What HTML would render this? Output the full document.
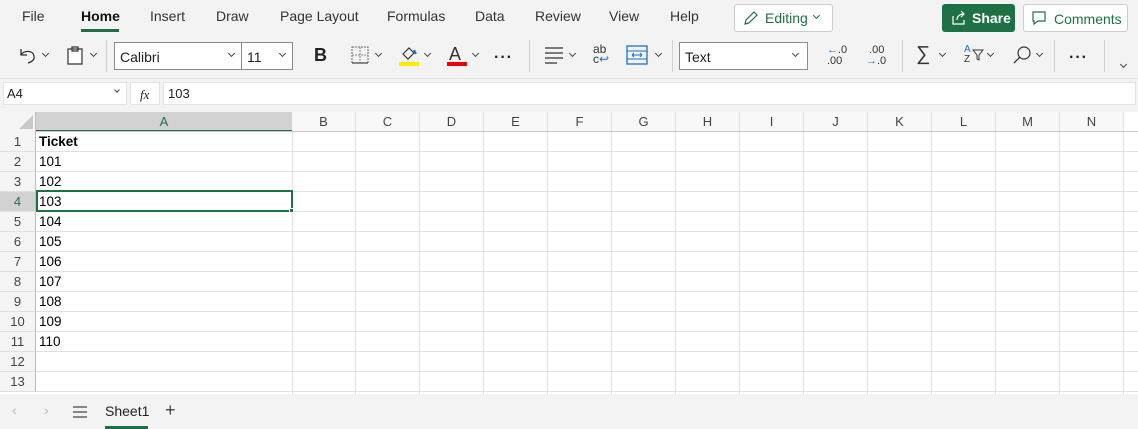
<!DOCTYPE html>
<html><head><meta charset="utf-8"><style>
*{box-sizing:border-box;margin:0;padding:0}
body{width:1138px;height:429px;overflow:hidden;background:#f3f3f3;font-family:"Liberation Sans",sans-serif;position:relative;color:#222}
.a{position:absolute}
.tab{position:absolute;top:8px;font-size:14px;color:#333}
.dd{position:absolute;background:#fff;border:1px solid #8a8a8a;height:28px;top:42px;font-size:14px;padding:6px 5px}
.chev{position:absolute;width:7px;height:7px;border-right:1.3px solid #444;border-bottom:1.3px solid #444;transform:rotate(45deg)}
.sep{position:absolute;top:40px;width:1px;height:32px;background:#d0d0d0}
.ch{position:absolute;top:112px;height:20px;font-size:13px;color:#444;text-align:center;line-height:19px;border-right:1px solid #e1e1e1;background:#f8f8f8}
.rh{position:absolute;left:0;width:36px;height:20px;font-size:13px;color:#444;text-align:center;line-height:20px;border-bottom:1px solid #e1e1e1;border-right:1px solid #bbb;background:#f5f5f5}
.hl{position:absolute;left:36px;width:1102px;height:1px;background:#e1e1e1}
.vl{position:absolute;top:132px;width:1px;height:262px;background:#e1e1e1}
.cell{position:absolute;left:39px;font-size:13.5px;color:#000;line-height:20px}
.dots{position:absolute;top:49px;font-size:16px;font-weight:bold;letter-spacing:1px}
</style></head><body>
<div class="tab" style="left:22px">File</div>
<div class="tab" style="left:81px;color:#111;font-weight:bold">Home</div>
<div class="a" style="left:81px;top:29px;width:38px;height:3px;background:#1e7145"></div>
<div class="tab" style="left:150px">Insert</div>
<div class="tab" style="left:216px">Draw</div>
<div class="tab" style="left:280px">Page Layout</div>
<div class="tab" style="left:387px">Formulas</div>
<div class="tab" style="left:475px">Data</div>
<div class="tab" style="left:535px">Review</div>
<div class="tab" style="left:609px">View</div>
<div class="tab" style="left:670px">Help</div>
<div class="a" style="left:734px;top:4px;width:99px;height:28px;background:#fff;border:1px solid #ccc;border-radius:3px;color:#1e7145;font-size:14px;padding:5px 0 0 30px">Editing</div>
<svg class="a" style="left:743px;top:10px" width="16" height="16"><path d="M2 14l1-4 8-8 3 3-8 8z" fill="none" stroke="#1e7145" stroke-width="1.2"/></svg>
<div class="chev" style="left:814px;top:13px;width:5px;height:5px;border-color:#1e7145"></div>
<div class="a" style="left:942px;top:4px;width:73px;height:28px;background:#1e7145;border-radius:3px;color:#fff;font-size:14px;font-weight:bold;padding:6px 0 0 30px">Share</div>
<svg class="a" style="left:951px;top:10px" width="16" height="16"><path d="M2 6v8h11v-4M6 10c0-4 3-6 7-6M10 1l3 3-3 3" fill="none" stroke="#fff" stroke-width="1.2"/></svg>
<div class="a" style="left:1023px;top:4px;width:105px;height:28px;background:#fff;border:1px solid #ccc;border-radius:3px;color:#1e7145;font-size:14px;padding:6px 0 0 30px">Comments</div>
<svg class="a" style="left:1031px;top:10px" width="16" height="16"><path d="M2 2h12v9H7l-4 3v-3H2z" fill="none" stroke="#1e7145" stroke-width="1.2"/></svg>
<!-- toolbar -->
<svg class="a" style="left:18px;top:46px" width="20" height="18"><path d="M3 3v6h6M3 9c3-5 12-5 13 1 1 4-3 6-6 7" fill="none" stroke="#333" stroke-width="1.3"/></svg>
<div class="chev" style="left:43px;top:51px;width:5px;height:5px"></div>
<svg class="a" style="left:66px;top:45px" width="18" height="20"><path d="M2 4h14v15H2zM6 2h6v4H6z" fill="#fff" stroke="#333" stroke-width="1.2"/></svg>
<div class="chev" style="left:91px;top:51px;width:5px;height:5px"></div>
<div class="sep" style="left:106px"></div>
<div class="dd" style="left:114px;width:128px">Calibri</div>
<div class="chev" style="left:229px;top:51px;width:5px;height:5px"></div>
<div class="dd" style="left:241px;width:52px">11</div>
<div class="chev" style="left:280px;top:51px;width:5px;height:5px"></div>
<div class="a" style="left:314px;top:45px;font-size:18px;font-weight:bold">B</div>
<svg class="a" style="left:351px;top:46px" width="20" height="20"><rect x="1" y="1" width="16" height="16" fill="none" stroke="#666" stroke-dasharray="2 1"/><path d="M9 1v16M1 9h16" stroke="#888" stroke-dasharray="2 1"/><path d="M1 17h16" stroke="#222"/></svg>
<div class="chev" style="left:376px;top:51px;width:5px;height:5px"></div>
<svg class="a" style="left:399px;top:44px" width="22" height="22"><path d="M4 10l6-6 5 5-6 6z" fill="none" stroke="#333" stroke-width="1.2"/><path d="M15 6l2 4" stroke="#1a73c8" stroke-width="2"/><rect x="0" y="18" width="20" height="4" fill="#ffeb00"/></svg>
<div class="chev" style="left:425px;top:51px;width:5px;height:5px"></div>
<div class="a" style="left:449px;top:44px;font-size:18px;color:#333">A</div>
<div class="a" style="left:447px;top:62px;width:20px;height:4px;background:#e00"></div>
<div class="chev" style="left:473px;top:51px;width:5px;height:5px"></div>
<div class="dots" style="left:494px">···</div>
<div class="sep" style="left:529px"></div>
<svg class="a" style="left:544px;top:46px" width="20" height="18"><path d="M1 2h18M1 7h18M1 12h18M1 17h12" stroke="#333" stroke-width="1.2"/></svg>
<div class="chev" style="left:570px;top:51px;width:5px;height:5px"></div>
<div class="a" style="left:593px;top:44px;font-size:12px;line-height:10px;color:#333">ab<br>c<span style="color:#1a73c8">↩</span></div>
<svg class="a" style="left:626px;top:45px" width="22" height="20"><rect x="1" y="1" width="20" height="18" fill="none" stroke="#1a73c8" stroke-width="1.3"/><path d="M1 6h20M1 14h20M6 10h10M6 10l2-2M6 10l2 2M16 10l-2-2M16 10l-2 2" stroke="#1a73c8"/></svg>
<div class="chev" style="left:656px;top:51px;width:5px;height:5px"></div>
<div class="sep" style="left:672px"></div>
<div class="dd" style="left:679px;width:129px">Text</div>
<div class="chev" style="left:793px;top:51px;width:5px;height:5px"></div>
<div class="a" style="left:827px;top:45px;font-size:11px;line-height:11px;color:#333"><span style="color:#1a73c8">←</span>.0<br>.00</div>
<div class="a" style="left:866px;top:45px;font-size:11px;line-height:11px;color:#333">&nbsp;.00<br><span style="color:#1a73c8">→</span>.0</div>
<div class="sep" style="left:902px"></div>
<div class="a" style="left:916px;top:43px;font-size:20px;color:#333">∑</div>
<div class="chev" style="left:940px;top:51px;width:5px;height:5px"></div>
<div class="a" style="left:964px;top:45px;font-size:10px;line-height:10px;color:#1a73c8">A<br><span style="color:#333">Z</span></div>
<svg class="a" style="left:972px;top:49px" width="12" height="12"><path d="M1 1h10L7 6v5l-2-1V6z" fill="none" stroke="#333"/></svg>
<div class="chev" style="left:988px;top:51px;width:5px;height:5px"></div>
<svg class="a" style="left:1012px;top:45px" width="20" height="20"><circle cx="12" cy="8" r="6" fill="none" stroke="#333" stroke-width="1.2"/><path d="M8 12l-6 6" stroke="#333" stroke-width="1.3"/></svg>
<div class="chev" style="left:1037px;top:51px;width:5px;height:5px"></div>
<div class="sep" style="left:1054px"></div>
<div class="dots" style="left:1069px">···</div>
<div class="sep" style="left:1104px"></div>
<div class="chev" style="left:1121px;top:62px;width:5px;height:5px"></div>
<!-- formula bar -->
<div class="a" style="left:0;top:78px;width:1138px;height:1px;background:#e0e0e0"></div>
<div class="a" style="left:3px;top:82px;width:124px;height:23px;background:#fff;border:1px solid #e4e4e4;font-size:13px;padding:3px 3px">A4</div>
<div class="chev" style="left:115px;top:88px;width:4px;height:4px"></div>
<div class="a" style="left:130px;top:82px;width:30px;height:23px;background:#fff;border:1px solid #e4e4e4;font-family:'Liberation Serif',serif;font-style:italic;font-size:13px;padding:4px 0 0 9px">fx</div>
<div class="a" style="left:163px;top:82px;width:973px;height:23px;background:#fff;border:1px solid #e4e4e4;font-size:13px;padding:3px 4px">103</div>
<!-- grid -->
<div class="a" style="left:0;top:112px;width:1138px;height:282px;background:#fff"></div>
<div class="a" style="left:0;top:112px;width:36px;height:20px;background:#f5f5f5;border-right:1px solid #bbb"></div>
<svg class="a" style="left:18px;top:114px" width="16" height="16"><path d="M15 1v14H1z" fill="#c8c8c8"/></svg>
<div id="g"></div>
<div class="a" style="left:36px;top:190px;width:257px;height:22px;border:2px solid #1e7145"></div>
<div class="a" style="left:289px;top:208px;width:5px;height:5px;background:#1e7145;border:1px solid #fff"></div>
<!-- sheet bar -->
<div class="a" style="left:0;top:394px;width:1138px;height:35px;background:#f3f3f3"></div>
<div class="a" style="left:12px;top:402px;font-size:14px;color:#bbb">‹</div>
<div class="a" style="left:44px;top:402px;font-size:14px;color:#bbb">›</div>
<svg class="a" style="left:73px;top:406px" width="14" height="12"><path d="M0 1h14M0 6h14M0 11h14" stroke="#444" stroke-width="1.2"/></svg>
<div class="a" style="left:105px;top:403px;font-size:14px;color:#222">Sheet1</div>
<div class="a" style="left:105px;top:426px;width:43px;height:3px;background:#1e7145"></div>
<div class="a" style="left:165px;top:400px;font-size:18px;color:#444">+</div>
<script>
var g=document.getElementById('g'),h='';
var cols='BCDEFGHIJKLMN';
h+='<div class="ch" style="left:36px;width:257px;background:#d2d2d2;color:#1e7145;border-bottom:2px solid #1e7145">A</div>';
for(var i=0;i<13;i++){var x=292+i*64;h+='<div class="ch" style="left:'+x+'px;width:64px">'+cols[i]+'</div>';h+='<div class="vl" style="left:'+(x+63)+'px"></div>';}
h+='<div class="vl" style="left:292px"></div>';
h+='<div class="a" style="left:36px;top:131px;width:1102px;height:1px;background:#c8c8c8"></div>';
var v=['Ticket','101','102','103','104','105','106','107','108','109','110','',''];
for(var r=0;r<13;r++){var y=132+r*20;
h+='<div class="rh" style="top:'+y+'px;'+(r==3?'background:#d2d2d2;color:#1e7145;':'')+'">'+(r+1)+'</div>';
h+='<div class="hl" style="top:'+(y+19)+'px"></div>';
h+='<div class="cell" style="top:'+y+'px;'+(r==0?'font-weight:bold':'')+'">'+v[r]+'</div>';}
g.innerHTML=h;
</script>
</body></html>
